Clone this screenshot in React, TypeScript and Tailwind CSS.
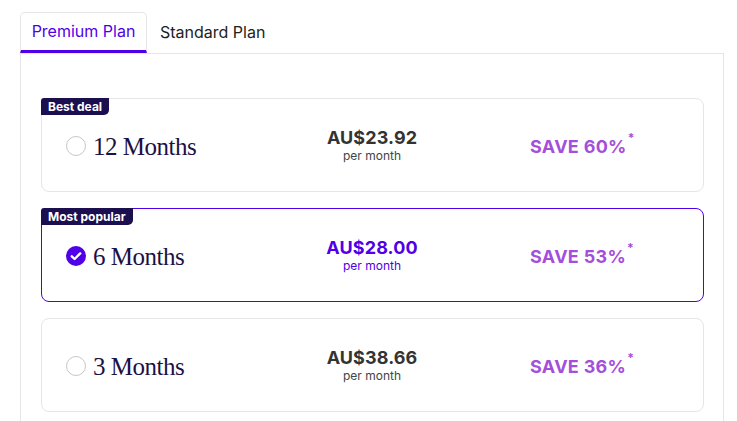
import { clsx } from "clsx";

// ── Data ──────────────────────────────────────────────────────
const plans = [
  { badge: "Best deal", months: "12 Months", price: "AU$23.92", save: "SAVE 60%", selected: false },
  { badge: "Most popular", months: "6 Months", price: "AU$28.00", save: "SAVE 53%", selected: true },
  { badge: null, months: "3 Months", price: "AU$38.66", save: "SAVE 36%", selected: false },
];

// ── Radio ─────────────────────────────────────────────────────
function Radio({ checked }: { checked: boolean }) {
  if (checked) {
    return (
      <svg width="20" height="20" viewBox="0 0 20 20" className="shrink-0">
        <circle cx="10" cy="10" r="10" fill="#4f00e9" />
        <path d="M5.8 10.3l2.8 2.7 5.6-5.6" fill="none" stroke="#fff" strokeWidth="2.4" strokeLinecap="round" strokeLinejoin="round" />
      </svg>
    );
  }
  return <span className="w-[20px] h-[20px] shrink-0 rounded-full border border-[#c8c8c8] bg-white" />;
}

// ── Plan card ─────────────────────────────────────────────────
function PlanCard({ plan }: { plan: (typeof plans)[number] }) {
  return (
    <div
      className={clsx(
        "relative h-[94px] rounded-lg border bg-white flex items-center pl-[24px]",
        plan.selected ? "border-[#4f00e9]" : "border-[#e6e6e6]",
      )}
    >
      {plan.badge && (
        <span className="absolute -top-px -left-px h-[17px] px-[7px] flex items-center rounded-tl-[3px] rounded-br-[5px] bg-[#1c0f4f] text-white text-[12px] font-bold leading-none">
          {plan.badge}
        </span>
      )}
      <div className="w-[226px] flex items-center gap-[7px] pt-[2px]">
        <Radio checked={plan.selected} />
        <span className="font-['Liberation_Serif',serif] text-[25px] tracking-[-0.5px] leading-none text-[#1b1145]">
          {plan.months}
        </span>
      </div>
      <div className="w-[160px] flex flex-col items-center pt-[2px]">
        <span className={clsx("text-[18px] font-bold leading-[20px] tracking-[0.1px]", plan.selected ? "text-[#4f00e9]" : "text-[#333333]")}>
          {plan.price}
        </span>
        <span className={clsx("text-[12px] leading-[16px]", plan.selected ? "text-[#4f00e9]" : "text-[#444444]")}>
          per month
        </span>
      </div>
      <div className="pl-[78px] pt-[3px] flex items-start">
        <span className="text-[18px] font-bold tracking-[0.3px] text-[#a44fdb] leading-none">{plan.save}</span>
        <span className="text-[12px] font-bold text-[#a44fdb] leading-none -mt-[6px] ml-[1px]">*</span>
      </div>
    </div>
  );
}

// ── App ───────────────────────────────────────────────────────
export default function App() {
  return (
    <div className="w-[737px] h-[421px] overflow-hidden bg-white pt-[12px] pl-[20px] font-['Inter',sans-serif]">
      <div className="flex h-[41px]">
        <div className="w-[127px] flex items-center justify-center rounded-t-[5px] border-x border-t border-[#e6e6e6] border-b-[3px] border-b-[#4f00e9] text-[16px] text-[#4f00e9] pb-[2px]">
          Premium Plan
        </div>
        <div className="px-[13px] flex items-center text-[16px] text-[#222222] pb-[2px]">Standard Plan</div>
      </div>
      <div className="w-[704px] h-[400px] border-x border-t border-[#e6e6e6] pt-[44px] pl-[20px] pr-[19px] flex flex-col gap-[16px]">
        {plans.map((p) => (
          <PlanCard key={p.months} plan={p} />
        ))}
      </div>
    </div>
  );
}
